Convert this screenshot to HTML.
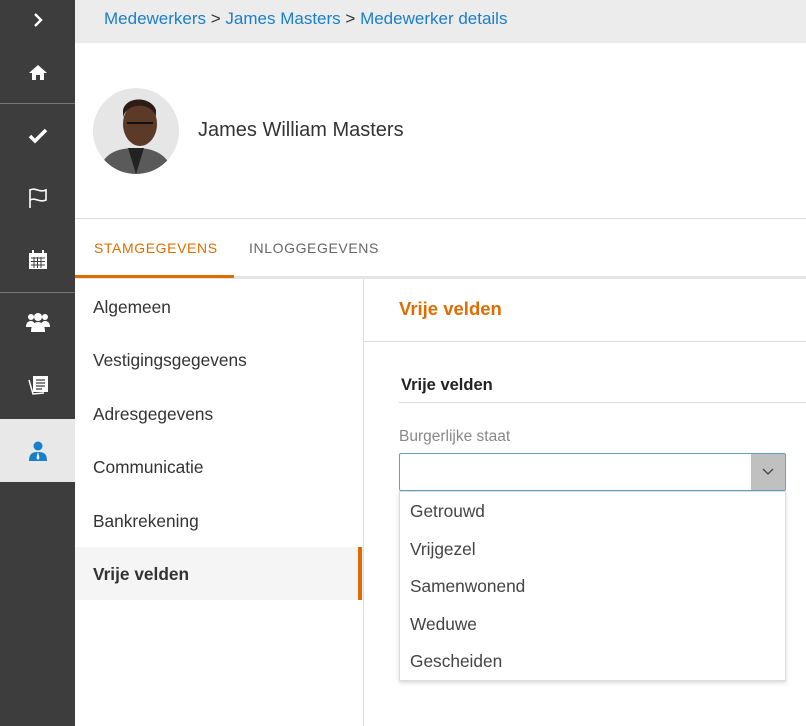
<!DOCTYPE html>
<html><head><meta charset="utf-8"><style>
*{box-sizing:border-box;margin:0;padding:0}
body{width:806px;height:726px;overflow:hidden;font-family:"Liberation Sans",sans-serif;background:#fff;position:relative}
.side{position:absolute;left:0;top:0;width:75px;height:726px;background:#3d3d3d}
.side .it{position:absolute;left:0;width:75px;display:flex;align-items:center;justify-content:center}
.sep{position:absolute;left:0;width:75px;height:1px;background:#777}
.bc{position:absolute;left:75px;top:0;width:731px;height:43px;background:#ececec;color:#1a7fc9;font-size:17px;padding:9px 0 0 29px}
.bc span{color:#333}
.name{position:absolute;left:198px;top:119px;font-size:20px;color:#333}
.line{position:absolute;background:#ddd;height:1px}
.tab{position:absolute;top:240px;font-size:14px;letter-spacing:.6px}
.nav{position:absolute;left:93px;font-size:17.3px;color:#333}
.opt{position:absolute;left:410px;font-size:17.3px;color:#444}
</style></head><body>
<div class="side">
 <div class="it" style="top:8px;height:24px"><svg width="14" height="16" viewBox="0 0 14 16"><path d="M4 2l6 6-6 6" stroke="#fff" stroke-width="2.4" fill="none"/></svg></div>
 <div class="it" style="top:60px;height:24px"><svg width="20" height="16" viewBox="0 0 20 16"><path d="M10 1L1 9h3v7h4v-5h4v5h4V9h3z" fill="#fff"/></svg></div>
 <div class="sep" style="top:103px"></div>
 <div class="it" style="top:124px;height:24px"><svg width="20" height="16" viewBox="0 0 20 16"><path d="M2 8l5 5L18 2" stroke="#fff" stroke-width="3.5" fill="none"/></svg></div>
 <div class="it" style="top:186px;height:24px"><svg width="22" height="20" viewBox="0 0 22 20"><path d="M3 1v19M3 2c6-3 9 3 16 0v10c-7 3-10-3-16 0" stroke="#fff" stroke-width="1.6" fill="none"/></svg></div>
 <div class="it" style="top:248px;height:24px"><svg width="20" height="20" viewBox="0 0 20 20"><rect x="1" y="3" width="18" height="16" fill="#fff"/><rect x="4" y="0" width="2" height="5" fill="#fff"/><rect x="14" y="0" width="2" height="5" fill="#fff"/><path d="M3 8h14M3 11.5h14M3 15h14M6 7v11M9.5 7v11M13 7v11" stroke="#3d3d3d" stroke-width="1"/></svg></div>
 <div class="sep" style="top:292px"></div>
 <div class="it" style="top:310px;height:24px"><svg width="24" height="20" viewBox="0 0 24 20"><circle cx="5" cy="5" r="3" fill="#fff"/><circle cx="19" cy="5" r="3" fill="#fff"/><circle cx="12" cy="5" r="4" fill="#fff"/><path d="M0 15c0-5 3-6 5-6s4 1 4 6zM15 15c0-5 2-6 4-6s5 1 5 6z" fill="#fff"/><path d="M5 20c0-8 4-10 7-10s7 2 7 10z" fill="#fff"/></svg></div>
 <div class="it" style="top:373px;height:24px"><svg width="22" height="20" viewBox="0 0 22 20"><path d="M2 5l4 14 11-1" stroke="#fff" stroke-width="1.5" fill="none"/><rect x="6" y="1" width="15" height="16" fill="#fff"/><path d="M9 5h9M9 8h9M9 11h9M9 14h6" stroke="#3d3d3d" stroke-width="1.3"/></svg></div>
 <div class="it" style="top:419px;height:63px;background:#e8e8e8"><svg width="18" height="20" viewBox="0 0 18 20"><circle cx="9" cy="5" r="4.5" fill="#1a7fc9"/><path d="M0 20c0-7 3-9 9-9s9 2 9 9z" fill="#1a7fc9"/><path d="M9 11l-1.5 6 1.5 2 1.5-2z" fill="#fff"/></svg></div>
</div>
<div class="bc">Medewerkers <span>&gt;</span> James Masters <span>&gt;</span> Medewerker details</div>
<svg style="position:absolute;left:93px;top:88px" width="86" height="86" viewBox="0 0 86 86"><defs><clipPath id="c"><circle cx="43" cy="43" r="43"/></clipPath></defs><g clip-path="url(#c)"><rect width="86" height="86" fill="#e6e6e6"/><path d="M5 86c5-22 20-26 38-26s32 6 38 26z" fill="#5a5a5a"/><path d="M35 60l8 26 8-26z" fill="#222"/><ellipse cx="47" cy="36" rx="17" ry="22" fill="#5b3a28"/><path d="M30 30c2-14 26-18 33-2v-6c-5-14-30-14-33 0z" fill="#2b1d16"/><path d="M34 35h26" stroke="#111" stroke-width="2"/></g></svg>
<div class="name">James William Masters</div>
<div class="line" style="left:75px;top:218px;width:731px"></div>
<div class="tab" style="left:94px;color:#e06c00">STAMGEGEVENS</div>
<div class="tab" style="left:249px;color:#666">INLOGGEGEVENS</div>
<div class="line" style="left:75px;top:276px;width:731px;height:3px;background:#e4e4e4"></div>
<div style="position:absolute;left:75px;top:275px;width:159px;height:3px;background:#e06c00"></div>
<div style="position:absolute;left:363px;top:279px;width:1px;height:447px;background:#ddd"></div>
<div class="nav" style="top:297px">Algemeen</div>
<div class="nav" style="top:350px">Vestigingsgegevens</div>
<div class="nav" style="top:404px">Adresgegevens</div>
<div class="nav" style="top:457px">Communicatie</div>
<div class="nav" style="top:511px">Bankrekening</div>
<div style="position:absolute;left:75px;top:547px;width:288px;height:53px;background:#f5f5f5"></div>
<div style="position:absolute;left:358px;top:547px;width:4px;height:53px;background:#e06c00"></div>
<div class="nav" style="top:564px;font-weight:bold">Vrije velden</div>
<div style="position:absolute;left:399px;top:298px;font-size:18.5px;font-weight:bold;color:#e06c00">Vrije velden</div>
<div class="line" style="left:364px;top:341px;width:442px"></div>
<div style="position:absolute;left:401px;top:376px;font-size:16.5px;font-weight:bold;color:#222">Vrije velden</div>
<div class="line" style="left:399px;top:402px;width:407px"></div>
<div style="position:absolute;left:399px;top:428px;font-size:15.5px;color:#888">Burgerlijke staat</div>
<div style="position:absolute;left:399px;top:453px;width:387px;height:38px;border:1px solid #5aa0d0;border-radius:2px;background:#fff"></div>
<div style="position:absolute;left:751px;top:454px;width:34px;height:36px;background:#c0c0c0;display:flex;align-items:center;justify-content:center"><svg width="12" height="8" viewBox="0 0 12 8"><path d="M1 1l5 5 5-5" stroke="#444" stroke-width="1.3" fill="none"/></svg></div>
<div style="position:absolute;left:399px;top:491px;width:387px;height:190px;background:#fff;border:1px solid #ddd;box-shadow:0 2px 4px rgba(0,0,0,.15)"></div>
<div class="opt" style="top:501px">Getrouwd</div>
<div class="opt" style="top:539px">Vrijgezel</div>
<div class="opt" style="top:576px">Samenwonend</div>
<div class="opt" style="top:614px">Weduwe</div>
<div class="opt" style="top:651px">Gescheiden</div>
</body></html>
